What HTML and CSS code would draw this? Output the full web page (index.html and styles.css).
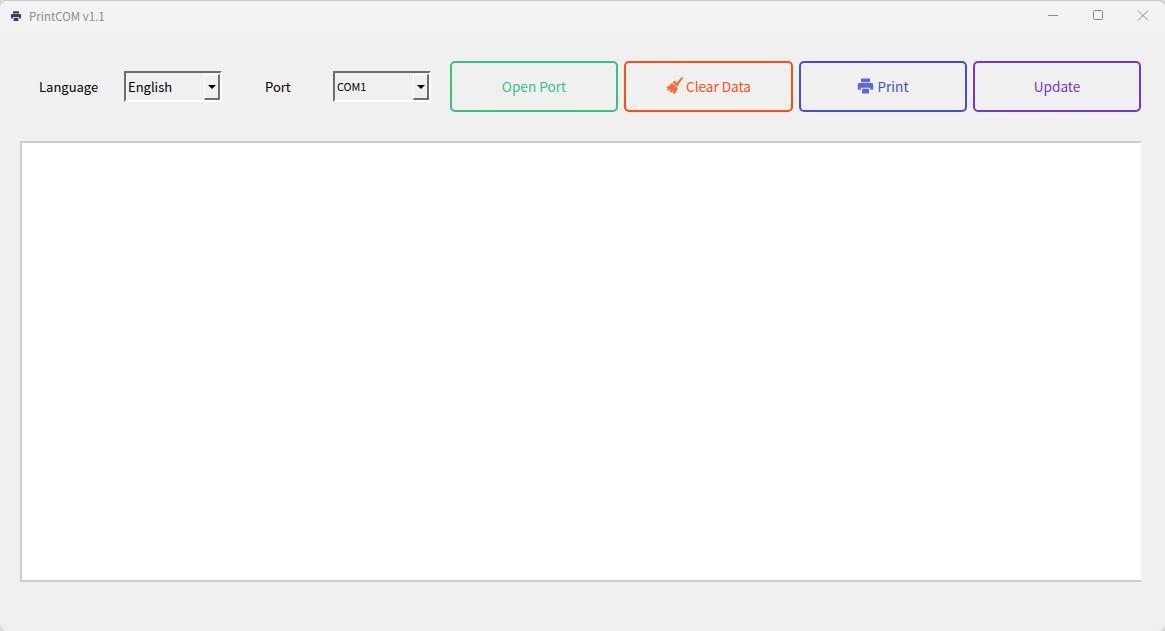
FILE: index.html
```html
<!DOCTYPE html>
<html lang="en">
<head>
<meta charset="utf-8">
<title>PrintCOM v1.1</title>
<link rel="stylesheet" href="styles.css">
</head>
<body>
<div class="window">
  <header class="titlebar">
    <div class="title-left">
      <svg class="app-icon" viewBox="0 0 16 16"><path fill="#3f3f56" d="M4 1.500h8v3.200H4zM2.600 5.400h10.800c.8 0 1.400.6 1.400 1.400v4.400h-2.600V9.400H3.800v1.800H1.200V6.800c0-.8.6-1.400 1.400-1.400zM4.800 10.400h6.400v4.100H4.800z"/></svg>
      <span class="title-text">PrintCOM v1.1</span>
    </div>
    <div class="controls">
      <svg class="ctl" viewBox="0 0 45 30"><path d="M18 14.500h10" stroke="#8a8a8a" fill="none"/></svg>
      <svg class="ctl" viewBox="0 0 45 30"><rect x="18.500" y="9.500" width="9" height="9" rx="1.200" stroke="#8a8a8a" fill="none"/></svg>
      <svg class="ctl" viewBox="0 0 45 30"><path d="M18 9.500l10 10M28 9.500l-10 10" stroke="#8a8a8a" fill="none"/></svg>
    </div>
  </header>
  <section class="toolbar">
    <span class="label label-lang">Language</span>
    <div class="combo"><span class="combo-value">English</span><span class="arrow-btn"><i class="arrow"></i></span></div>
    <span class="label label-port">Port</span>
    <div class="combo"><span class="combo-value small">COM1</span><span class="arrow-btn"><i class="arrow"></i></span></div>
    <div class="buttons">
      <button class="btn green">Open Port</button>
      <button class="btn orange">
        <svg class="ico broom" viewBox="0 0 17 17"><path fill="#ff6a33" d="M15.600 0L17 1.200 12 8 10.300 6.600zM7.200 4.600c.5-.6 1.300-.7 1.900-.2l3.100 2.600c.6.500.7 1.300.2 1.900l-.7.800-5.200-4.300zM5.700 5.900l6 5c-.5 2.300-1.700 4.400-3.200 6.100l-2-1.100 1-2.300-2.400 1.800-1.800-1.100 1.600-2.200-2.700 1.500-1.500-1.300 1.100-1L0 10.300C2.300 9.800 4.200 8 5.700 5.900z"/></svg>Clear Data</button>
      <button class="btn blue">
        <svg class="ico printer" viewBox="0 0 16 16"><path fill="#5a6ad8" d="M3.500.6h9v3.700h-9zM2 5h12c1 0 1.700.7 1.700 1.700v5h-3V9.700H3.300v2h-3v-5C.3 5.700 1 5 2 5zM4.500 10.700h7v4.700h-7z"/></svg>Print</button>
      <button class="btn purple">Update</button>
    </div>
  </section>
  <main class="output"></main>
</div>
</body>
</html>
```
FILE: styles.css
```css
* { box-sizing: border-box; }
html, body { margin: 0; height: 100%; background: #d9d9d9; }
body { font-family: "Noto Sans CJK SC", "Noto Sans", sans-serif; font-size: 14px; overflow: hidden; }
.window {
  height: 631px;
  background: #f0f0f0;
  border-top: 1px solid #c8c8c8;
  border-radius: 8px;
  overflow: hidden;
  display: flex;
  flex-direction: column;
}
.titlebar {
  height: 30px;
  background: #f3f3f3;
  display: flex;
  align-items: center;
  justify-content: space-between;
  flex: none;
}
.title-left { display: flex; align-items: center; padding-left: 10px; }
.app-icon { width: 12px; height: 12px; margin-right: 7px; }
.title-text { font-size: 11.500px; color: #8c8c8c; line-height: 30px; padding-bottom: 1px; }
.controls { display: flex; }
.ctl { width: 45px; height: 30px; display: block; }
.toolbar {
  display: flex;
  align-items: center;
  height: 51px;
  margin-top: 30px;
  padding-left: 39px;
  flex: none;
}
.label { font-size: 13px; color: #000; }
.label-lang { width: 85px; }
.label-port { width: 68px; margin-left: 43px; }
.combo {
  width: 98px;
  height: 31px;
  display: flex;
  justify-content: space-between;
  border: 2px solid;
  border-color: #6d6d6d #fff #fff #6d6d6d;
  background: #f0f0f0;
}
.combo-value { font-size: 13px; line-height: 27px; padding-left: 2px; color: #000; }
.combo-value.small { font-size: 10.800px; }
.arrow-btn {
  width: 16px;
  height: 26px;
  margin-top: 1px;
  border-style: solid;
  border-color: #fff #6d6d6d #6d6d6d #fff;
  border-width: 1px 2px 2px 1px;
  display: flex;
  align-items: center;
  justify-content: center;
  background: #f0f0f0;
}
.arrow { width: 0; height: 0; border: 4px solid transparent; border-top: 4px solid #000; border-bottom: 0; }
.buttons { display: flex; margin-left: 19px; gap: 6px; }
.btn {
  width: 168px;
  height: 51px;
  background: transparent;
  border: 2px solid;
  border-radius: 5px;
  font: inherit;
  font-size: 13.600px;
  display: flex;
  align-items: center;
  justify-content: center;
  padding: 0 0 2px;
}
.btn.orange { width: 169px; }
.green { border-color: #35c47c; color: #35c47c; }
.orange { border-color: #f9500f; color: #f9500f; }
.blue { border-color: #3f51cf; color: #3f51cf; }
.purple { border-color: #7535d2; color: #7235d2; }
.ico { flex: none; margin-right: 3px; }
.broom { width: 17px; height: 17px; }
.printer { width: 17px; height: 16px; }
.output {
  width: 1121px;
  height: 441px;
  margin: 29px 0 0 20px;
  background: #fff;
  border: 2px solid #cdcdcd;
  border-right: 0;
  flex: none;
}
```
